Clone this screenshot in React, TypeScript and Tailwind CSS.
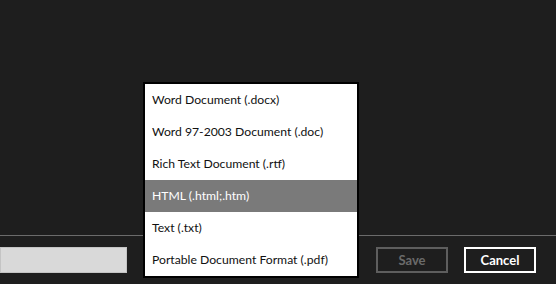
import React from "react";

const items = [
  "Word Document (.docx)",
  "Word 97-2003 Document (.doc)",
  "Rich Text Document (.rtf)",
  "HTML (.html;.htm)",
  "Text (.txt)",
  "Portable Document Format (.pdf)",
];

export default function App() {
  return (
    <div
      className="relative w-[556px] h-[284px] bg-[#1e1e1e] flex flex-col overflow-hidden"
      style={{ fontFamily: 'Lato, "Noto Sans", sans-serif' }}
    >
      <div className="flex-1" />
      <div className="h-px bg-[#6b6b6b]" />
      <div className="h-[48px] flex items-start pt-[11px] pr-[20px]">
        <div className="w-[127px] h-[26px] bg-[#d9d9d9] border border-[#c4c4c4]" />
        <div className="flex-1" />
        <button className="w-[72px] h-[26px] border-2 border-[#5e5e5e] text-[#6a6a6a] text-[13px] font-bold flex items-center justify-center leading-none">
          Save
        </button>
        <button className="ml-[16px] w-[72px] h-[26px] border-2 border-white text-white text-[13px] font-bold flex items-center justify-center leading-none">
          Cancel
        </button>
      </div>
      <div className="absolute left-[143px] top-[82px] w-[216px] border-2 border-black bg-white flex flex-col">
        {items.map((t, i) => (
          <div
            key={t}
            className={
              "h-[32px] flex items-center pl-[7px] text-[12.2px] " +
              (i === 3 ? "bg-[#7a7a7a] text-white" : "text-[#111111]")
            }
          >
            {t}
          </div>
        ))}
      </div>
    </div>
  );
}
